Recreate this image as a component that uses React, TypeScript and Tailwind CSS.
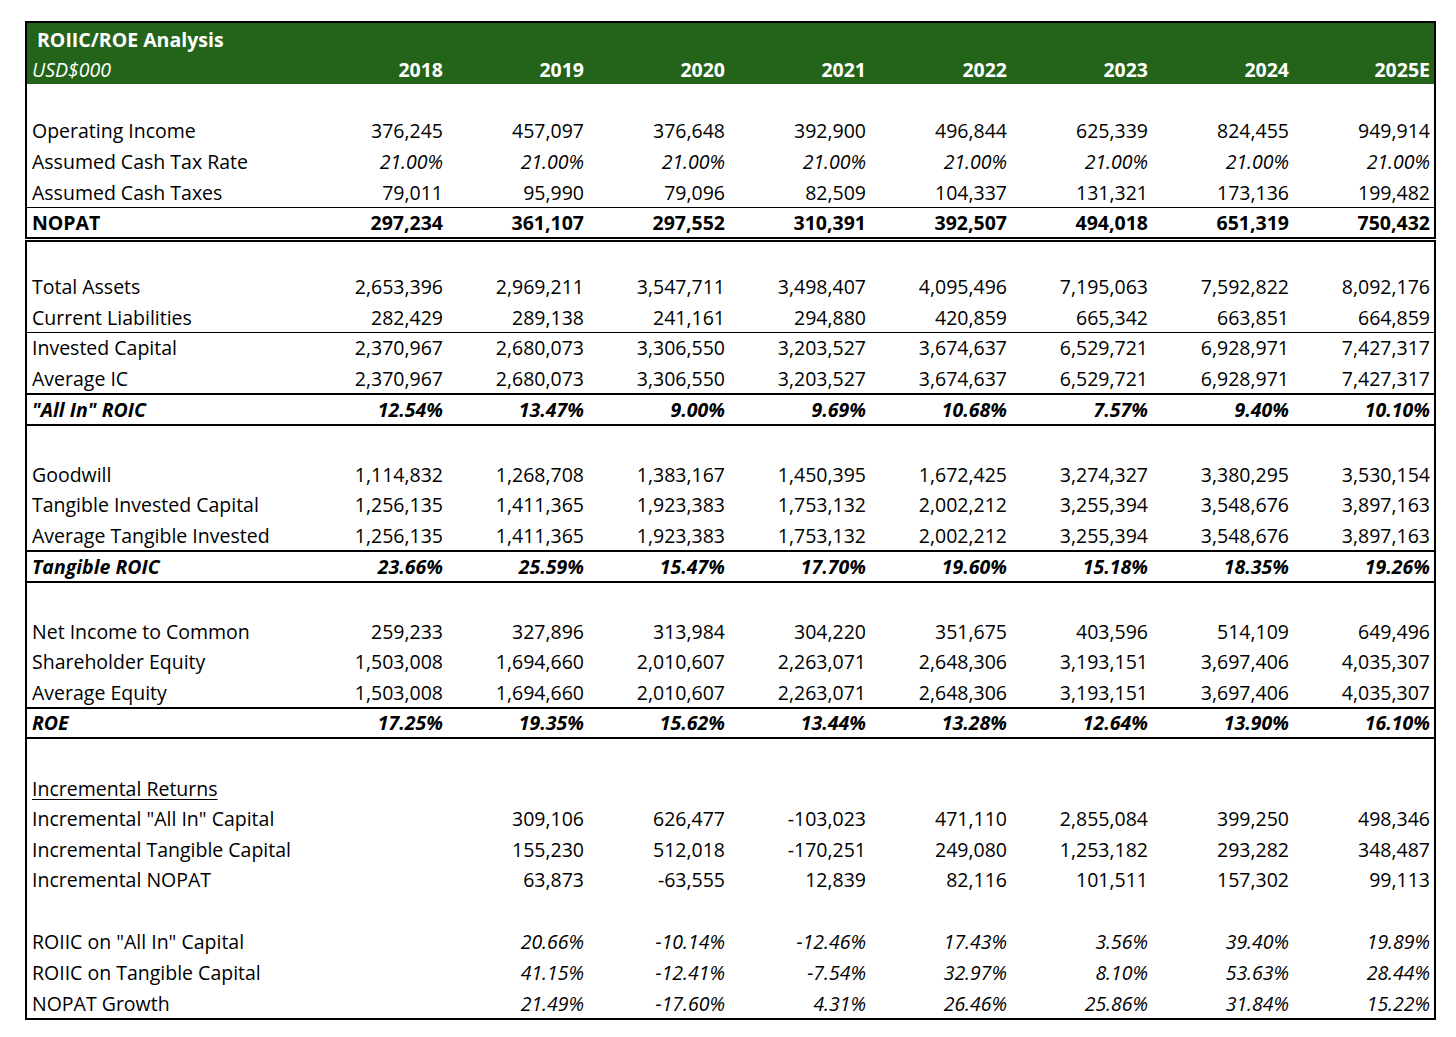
import React from "react";

// --- Data ---
const years = ["2018", "2019", "2020", "2021", "2022", "2023", "2024", "2025E"];

type RowKind = "plain" | "italic" | "bold" | "boldItalic" | "blank" | "heading";

type Row = {
  label?: string;
  values?: string[];
  kind: RowKind;
  line?: "thin" | "thick";
  h?: string;
};

const topSection: Row[] = [
  { kind: "blank" },
  { label: "Operating Income", kind: "plain", values: ["376,245", "457,097", "376,648", "392,900", "496,844", "625,339", "824,455", "949,914"] },
  { label: "Assumed Cash Tax Rate", kind: "italic", values: ["21.00%", "21.00%", "21.00%", "21.00%", "21.00%", "21.00%", "21.00%", "21.00%"] },
  { label: "Assumed Cash Taxes", kind: "plain", values: ["79,011", "95,990", "79,096", "82,509", "104,337", "131,321", "173,136", "199,482"] },
  { label: "NOPAT", kind: "bold", line: "thin", values: ["297,234", "361,107", "297,552", "310,391", "392,507", "494,018", "651,319", "750,432"] },
];

const mainSection: Row[] = [
  { kind: "blank", h: "h-[28.6px]" },
  { label: "Total Assets", kind: "plain", values: ["2,653,396", "2,969,211", "3,547,711", "3,498,407", "4,095,496", "7,195,063", "7,592,822", "8,092,176"] },
  { label: "Current Liabilities", kind: "plain", values: ["282,429", "289,138", "241,161", "294,880", "420,859", "665,342", "663,851", "664,859"] },
  { label: "Invested Capital", kind: "plain", line: "thin", values: ["2,370,967", "2,680,073", "3,306,550", "3,203,527", "3,674,637", "6,529,721", "6,928,971", "7,427,317"] },
  { label: "Average IC", kind: "plain", values: ["2,370,967", "2,680,073", "3,306,550", "3,203,527", "3,674,637", "6,529,721", "6,928,971", "7,427,317"] },
  { label: "\"All In\" ROIC", kind: "boldItalic", line: "thick", values: ["12.54%", "13.47%", "9.00%", "9.69%", "10.68%", "7.57%", "9.40%", "10.10%"] },
  { kind: "blank", line: "thick", h: "h-[34.5px]" },
  { label: "Goodwill", kind: "plain", values: ["1,114,832", "1,268,708", "1,383,167", "1,450,395", "1,672,425", "3,274,327", "3,380,295", "3,530,154"] },
  { label: "Tangible Invested Capital", kind: "plain", values: ["1,256,135", "1,411,365", "1,923,383", "1,753,132", "2,002,212", "3,255,394", "3,548,676", "3,897,163"] },
  { label: "Average Tangible Invested", kind: "plain", values: ["1,256,135", "1,411,365", "1,923,383", "1,753,132", "2,002,212", "3,255,394", "3,548,676", "3,897,163"] },
  { label: "Tangible ROIC", kind: "boldItalic", line: "thick", values: ["23.66%", "25.59%", "15.47%", "17.70%", "19.60%", "15.18%", "18.35%", "19.26%"] },
  { kind: "blank", line: "thick", h: "h-[34.5px]" },
  { label: "Net Income to Common", kind: "plain", values: ["259,233", "327,896", "313,984", "304,220", "351,675", "403,596", "514,109", "649,496"] },
  { label: "Shareholder Equity", kind: "plain", values: ["1,503,008", "1,694,660", "2,010,607", "2,263,071", "2,648,306", "3,193,151", "3,697,406", "4,035,307"] },
  { label: "Average Equity", kind: "plain", values: ["1,503,008", "1,694,660", "2,010,607", "2,263,071", "2,648,306", "3,193,151", "3,697,406", "4,035,307"] },
  { label: "ROE", kind: "boldItalic", line: "thick", values: ["17.25%", "19.35%", "15.62%", "13.44%", "13.28%", "12.64%", "13.90%", "16.10%"] },
  { kind: "blank", line: "thick", h: "h-[34.5px]" },
  { label: "Incremental Returns", kind: "heading" },
  { label: "Incremental \"All In\" Capital", kind: "plain", values: ["", "309,106", "626,477", "-103,023", "471,110", "2,855,084", "399,250", "498,346"] },
  { label: "Incremental Tangible Capital", kind: "plain", values: ["", "155,230", "512,018", "-170,251", "249,080", "1,253,182", "293,282", "348,487"] },
  { label: "Incremental NOPAT", kind: "plain", values: ["", "63,873", "-63,555", "12,839", "82,116", "101,511", "157,302", "99,113"] },
  { kind: "blank", h: "h-[31.6px]" },
  { label: "ROIIC on \"All In\" Capital", kind: "italic", values: ["", "20.66%", "-10.14%", "-12.46%", "17.43%", "3.56%", "39.40%", "19.89%"] },
  { label: "ROIIC on Tangible Capital", kind: "italic", values: ["", "41.15%", "-12.41%", "-7.54%", "32.97%", "8.10%", "53.63%", "28.44%"] },
  { label: "NOPAT Growth", kind: "italic", values: ["", "21.49%", "-17.60%", "4.31%", "26.46%", "25.86%", "31.84%", "15.22%"] },
];

// --- Row renderer ---
const TableRow = ({ row }: { row: Row }) => {
  // rows with a rule on top already get nudged down by the border, so skip the padding there
  const lineClass =
    row.line === "thick" ? "border-t-2 border-black" : row.line === "thin" ? "border-t border-black" : "pt-[2px]";
  const height = row.h ?? "h-[30.6px]";
  const labelClass =
    row.kind === "bold"
      ? "font-bold"
      : row.kind === "boldItalic"
      ? "font-bold italic"
      : row.kind === "heading"
      ? "underline underline-offset-[3px] decoration-1"
      : "";
  const valueClass =
    row.kind === "bold"
      ? "font-bold"
      : row.kind === "boldItalic"
      ? "font-bold italic"
      : row.kind === "italic"
      ? "italic"
      : "";

  return (
    <div className={`flex items-center ${height} ${lineClass}`}>
      <div className={`w-[279px] shrink-0 pl-[5px] whitespace-nowrap ${labelClass}`}>{row.label}</div>
      {row.values &&
        row.values.map((v, i) => (
          <div key={i} className={`w-[141px] shrink-0 pr-[4px] text-right whitespace-nowrap ${valueClass}`}>
            {v}
          </div>
        ))}
    </div>
  );
};

const App: React.FC = () => {
  return (
    <div
      className="min-h-screen w-full bg-white pt-[21px] pl-[25px] text-[19.5px] leading-none text-black"
      style={{ fontFamily: '"Open Sans", "Noto Sans", sans-serif' }}
    >
      <div className="w-[1411px]">
        {/* Header + NOPAT block */}
        <div className="border-2 border-black">
          <div className="bg-[#24641a] text-white">
            <div className="flex h-[30.6px] items-center pt-[2px] pl-[10px] font-bold">ROIIC/ROE Analysis</div>
            <div className="flex h-[30.6px] items-center pt-[2px]">
              <div className="w-[279px] shrink-0 pl-[5px] italic">USD$000</div>
              {years.map((y) => (
                <div key={y} className="w-[141px] shrink-0 pr-[4px] text-right font-bold">
                  {y}
                </div>
              ))}
            </div>
          </div>
          {topSection.map((row, i) => (
            <TableRow key={i} row={row} />
          ))}
        </div>

        {/* Capital / returns block */}
        <div className="mt-[1px] border-2 border-black">
          {mainSection.map((row, i) => (
            <TableRow key={i} row={row} />
          ))}
        </div>
      </div>
    </div>
  );
};

export default App;
